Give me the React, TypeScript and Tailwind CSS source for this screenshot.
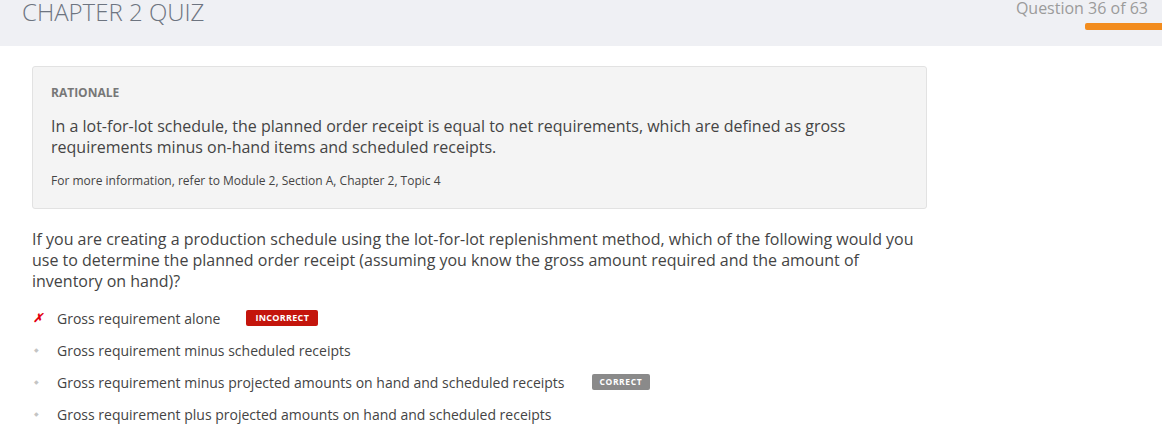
const options = [
  { text: "Gross requirement alone", state: "incorrect" },
  { text: "Gross requirement minus scheduled receipts", state: "" },
  { text: "Gross requirement minus projected amounts on hand and scheduled receipts", state: "correct" },
  { text: "Gross requirement plus projected amounts on hand and scheduled receipts", state: "" },
];

export default function App() {
  return (
    <div className="min-h-screen bg-white text-[#444] overflow-hidden" style={{ fontFamily: '"Open Sans", sans-serif' }}>
      {/* Header */}
      <header className="h-[46px] bg-[#eff0f4] flex justify-between">
        <h1 className="pl-[22px] -mt-[6px] text-[24px] font-light text-[#6d7480] leading-normal">
          CHAPTER 2 QUIZ
        </h1>
        <div className="flex flex-col items-end">
          <p className="pr-[14px] -mt-[4px] text-[16px] text-[#9b9b9b] leading-normal">Question 36 of 63</p>
          <div className="mt-[3px] w-[77px] h-[7px] bg-[#f28c1e] rounded-l-[2px]" />
        </div>
      </header>

      <main className="pl-8 pt-5">
        {/* Rationale */}
        <section className="w-[895px] bg-[#f4f4f4] border border-[#e2e2e2] rounded-[3px] pl-[18px] pr-6 pt-[17px] pb-[19px]">
          <h2 className="text-[12px] font-bold text-[#777] leading-[18px]">RATIONALE</h2>
          <p className="mt-[14px] text-[16px] leading-[21px] text-[#444] max-w-[820px]">
            In a lot-for-lot schedule, the planned order receipt is equal to net requirements, which are defined as gross
            requirements minus on-hand items and scheduled receipts.
          </p>
          <p className="mt-[15px] text-[12px] leading-[16px] text-[#444]">
            For more information, refer to Module 2, Section A, Chapter 2, Topic 4
          </p>
        </section>

        {/* Question */}
        <p className="mt-[20px] max-w-[890px] text-[16px] leading-[21px] text-[#444]">
          If you are creating a production schedule using the lot-for-lot replenishment method, which of the following would you
          use to determine the planned order receipt (assuming you know the gross amount required and the amount of
          inventory on hand)?
        </p>

        <ul className="mt-[10px] flex flex-col">
          {options.map((o, i) => (
            <li key={i} className="h-[32px] flex items-center">
              <span className="w-[25px] pl-[1px] flex justify-start">
                {o.state === "incorrect" ? (
                  <span className="text-[12px] font-bold text-[#e3000f] italic leading-none">✗</span>
                ) : (
                  <span className="ml-[1px] text-[6px] text-[#c4c4c4] leading-none">◆</span>
                )}
              </span>
              <span className="text-[14px] text-[#444]">{o.text}</span>
              {o.state === "incorrect" && (
                <span className="ml-[26px] h-[16px] px-[9px] flex items-center rounded-[2px] bg-[#c4150c] text-white text-[9px] font-bold tracking-[0.3px]">
                  INCORRECT
                </span>
              )}
              {o.state === "correct" && (
                <span className="ml-[27px] h-[16px] px-[8px] flex items-center rounded-[2px] bg-[#8a8a8a] text-white text-[8.5px] font-bold tracking-[0.6px]">
                  CORRECT
                </span>
              )}
            </li>
          ))}
        </ul>
      </main>
    </div>
  );
}
